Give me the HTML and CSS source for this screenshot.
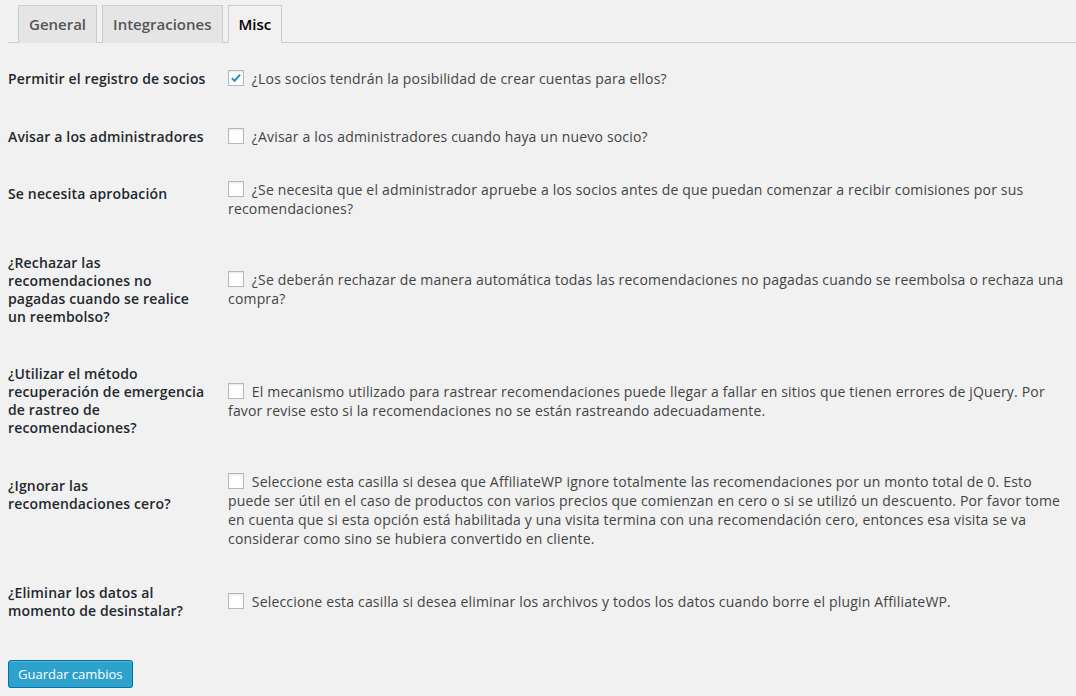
FILE: index.html
```html
<!DOCTYPE html>
<html lang="es">
<head>
    <meta charset="UTF-8">
    <title>AffiliateWP - Ajustes</title>
    <link rel="stylesheet" href="styles.css">
</head>
<body>

<div class="wrap">
    <div class="nav-tab-wrapper">
        <a class="nav-tab" href="#">General</a>
        <a class="nav-tab" href="#">Integraciones</a>
        <a class="nav-tab nav-tab-active" href="#">Misc</a>
    </div>

    <form>
        <table class="form-table">
            <tr>
                <th>Permitir el registro de socios</th>
                <td>
                    <label><span class="checkbox checked"><svg viewBox="0 0 16 16"><path d="M3.2 8.2 L6.4 11.3 L12.6 4.2" /></svg></span> ¿Los socios tendrán la posibilidad de crear cuentas para ellos?</label>
                </td>
            </tr>
            <tr>
                <th>Avisar a los administradores</th>
                <td>
                    <label><span class="checkbox"></span> ¿Avisar a los administradores cuando haya un nuevo socio?</label>
                </td>
            </tr>
            <tr>
                <th>Se necesita aprobación</th>
                <td>
                    <label><span class="checkbox"></span> ¿Se necesita que el administrador apruebe a los socios antes de que puedan comenzar a recibir comisiones por sus recomendaciones?</label>
                </td>
            </tr>
            <tr>
                <th>¿Rechazar las recomendaciones no pagadas cuando se realice un reembolso?</th>
                <td>
                    <label><span class="checkbox"></span> ¿Se deberán rechazar de manera automática todas las recomendaciones no pagadas cuando se reembolsa o rechaza una compra?</label>
                </td>
            </tr>
            <tr>
                <th>¿Utilizar el método recuperación de emergencia de rastreo de recomendaciones?</th>
                <td>
                    <label><span class="checkbox"></span> El mecanismo utilizado para rastrear recomendaciones puede llegar a fallar en sitios que tienen errores de jQuery. Por favor revise esto si la recomendaciones no se están rastreando adecuadamente.</label>
                </td>
            </tr>
            <tr>
                <th>¿Ignorar las recomendaciones cero?</th>
                <td>
                    <label><span class="checkbox"></span> Seleccione esta casilla si desea que AffiliateWP ignore totalmente las recomendaciones por un monto total de 0. Esto puede ser útil en el caso de productos con varios precios que comienzan en cero o si se utilizó un descuento. Por favor tome en cuenta que si esta opción está habilitada y una visita termina con una recomendación cero, entonces esa visita se va considerar como sino se hubiera convertido en cliente.</label>
                </td>
            </tr>
            <tr>
                <th>¿Eliminar los datos al momento de desinstalar?</th>
                <td>
                    <label><span class="checkbox"></span> Seleccione esta casilla si desea eliminar los archivos y todos los datos cuando borre el plugin AffiliateWP.</label>
                </td>
            </tr>
        </table>

        <p class="submit">
            <button type="button" class="button-primary">Guardar cambios</button>
        </p>
    </form>
</div>

</body>
</html>
```

FILE: styles.css
```css
/* Admin page base */
body {
    margin: 0;
    background: #f1f1f1;
    font-family: "Open Sans", "Noto Sans", sans-serif;
    font-size: 13px;
    color: #444;
}

.wrap {
    padding-left: 8px;
}

/* Tabs */
.nav-tab-wrapper {
    display: flex;
    gap: 5px;
    padding: 5px 0 0 10px;
    border-bottom: 1px solid #ccc;
}

.nav-tab {
    display: block;
    margin-bottom: -1px;
    padding: 5px 10px;
    border: 1px solid #ccc;
    border-bottom: none;
    background: #e5e5e5;
    color: #555;
    font-size: 15px;
    font-weight: 600;
    line-height: 26px;
    text-decoration: none;
}

.nav-tab-active {
    background: #f1f1f1;
    border-bottom: 1px solid #f1f1f1;
    color: #000;
}

/* Settings table */
.form-table {
    width: 100%;
    border-collapse: collapse;
    margin-top: 7px;
}

.form-table th {
    width: 200px;
    padding: 20px 10px 19.6px 0;
    vertical-align: top;
    text-align: left;
    font-size: 14px;
    font-weight: 600;
    line-height: 18px;
    letter-spacing: 0.15px;
    color: #23282d;
}

.form-table td {
    padding: 15px 4px 15px 10px;
    vertical-align: middle;
    font-size: 14px;
    line-height: 19.2px;
    letter-spacing: 0.18px;
}

.checkbox {
    display: inline-block;
    width: 16px;
    height: 16px;
    margin: -4px 4px 0 0;
    vertical-align: middle;
    box-sizing: border-box;
    border: 1px solid #b4b9be;
    background: #fff;
    box-shadow: inset 0 1px 2px rgba(0, 0, 0, 0.1);
}

.checkbox svg {
    display: block;
    width: 14px;
    height: 14px;
    fill: none;
    stroke: #1e8cbe;
    stroke-width: 2.2;
}

/* Save button */
.submit {
    margin: 21px 0 0;
}

.button-primary {
    height: 28px;
    padding: 0 9px;
    border: 1px solid #0074a2;
    border-radius: 3px;
    background: #2ea2cc;
    box-shadow: inset 0 1px 0 rgba(120, 200, 230, 0.5), 0 1px 0 rgba(0, 0, 0, 0.15);
    color: #fff;
    font-family: "Open Sans", "Noto Sans", sans-serif;
    font-size: 13px;
    line-height: 26px;
}
```
